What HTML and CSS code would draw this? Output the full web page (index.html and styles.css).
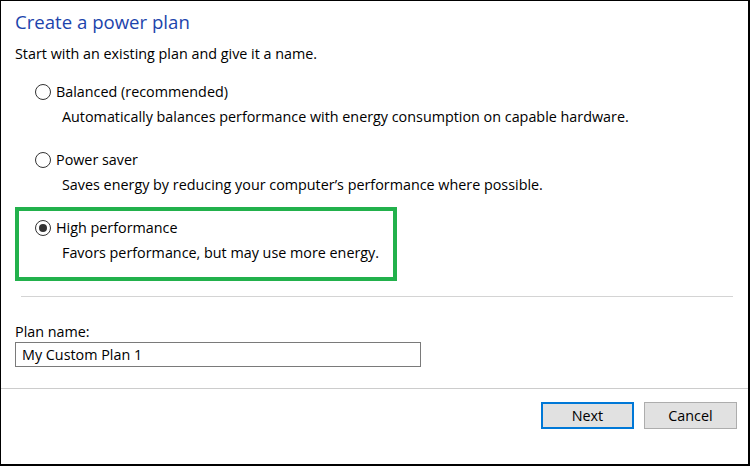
FILE: index.html
```html
<!DOCTYPE html>
<html>
<head>
<meta charset="utf-8">
<link rel="stylesheet" href="styles.css">
</head>
<body>
<div class="window">
  <div class="content">
    <h1 class="title">Create a power plan</h1>
    <p class="intro">Start with an existing plan and give it a name.</p>
    <div class="options">
      <div class="option">
        <div class="option-label"><span class="radio"></span>Balanced (recommended)</div>
        <div class="option-desc">Automatically balances performance with energy consumption on capable hardware.</div>
      </div>
      <div class="option">
        <div class="option-label"><span class="radio"></span>Power saver</div>
        <div class="option-desc">Saves energy by reducing your computer’s performance where possible.</div>
      </div>
      <div class="option highlighted">
        <div class="option-label"><span class="radio checked"></span>High performance</div>
        <div class="option-desc">Favors performance, but may use more energy.</div>
      </div>
    </div>
    <div class="separator"></div>
    <div class="field-label">Plan name:</div>
    <div class="textbox">My Custom Plan 1</div>
  </div>
  <div class="footer">
    <div class="button primary">Next</div>
    <div class="button">Cancel</div>
  </div>
</div>
</body>
</html>
```

FILE: styles.css
```css
html, body {
  margin: 0;
  padding: 0;
  background: #ffffff;
}

body {
  font-family: "Open Sans", "Noto Sans", sans-serif;
  font-size: 14.35px;
  color: #000000;
}

.window {
  box-sizing: border-box;
  width: 750px;
  height: 466px;
  border-style: solid;
  border-color: #000000;
  border-width: 1px 2px 2px 1px;
  display: flex;
  flex-direction: column;
  background: #ffffff;
}

.content {
  flex: 1;
  padding: 8px 14px 0 14px;
}

.title {
  margin: 0;
  font-size: 18.6px;
  font-weight: normal;
  line-height: 26px;
  color: #1c44ac;
}

.intro {
  margin: 9px 0 0 0;
  line-height: 20px;
}

.options {
  margin-top: 16px;
  display: flex;
  flex-direction: column;
  gap: 18px;
}

.option {
  position: relative;
  padding-left: 20px;
}

.option-label {
  display: flex;
  align-items: center;
  gap: 5px;
  line-height: 24px;
}

.option-desc {
  line-height: 26px;
  padding-left: 27px;
}

.radio {
  box-sizing: border-box;
  width: 16px;
  height: 16px;
  border: 1px solid #333333;
  border-radius: 50%;
  display: flex;
  align-items: center;
  justify-content: center;
  flex: none;
}

.radio.checked::after {
  content: "";
  width: 8px;
  height: 8px;
  border-radius: 50%;
  background: #333333;
}

.highlighted::before {
  content: "";
  position: absolute;
  left: 0;
  top: -9px;
  width: 382px;
  height: 74px;
  box-sizing: border-box;
  border: 4px solid #22b14c;
}

.separator {
  height: 1px;
  background: #d4d4d4;
  margin: 30px 1px 0 6px;
}

.field-label {
  margin-top: 25px;
  line-height: 20px;
}

.textbox {
  box-sizing: border-box;
  width: 406px;
  height: 25px;
  border: 1px solid #7a7a7a;
  padding-left: 6px;
  line-height: 23px;
}

.footer {
  border-top: 1px solid #cccccc;
  height: 76px;
  box-sizing: border-box;
  padding: 13px 11px 0 0;
  display: flex;
  justify-content: flex-end;
  align-items: flex-start;
  gap: 10px;
}

.button {
  box-sizing: border-box;
  width: 93px;
  height: 27px;
  background: #e1e1e1;
  border: 1px solid #adadad;
  display: flex;
  align-items: center;
  justify-content: center;
}

.button.primary {
  border: 2px solid #0078d7;
}
```
